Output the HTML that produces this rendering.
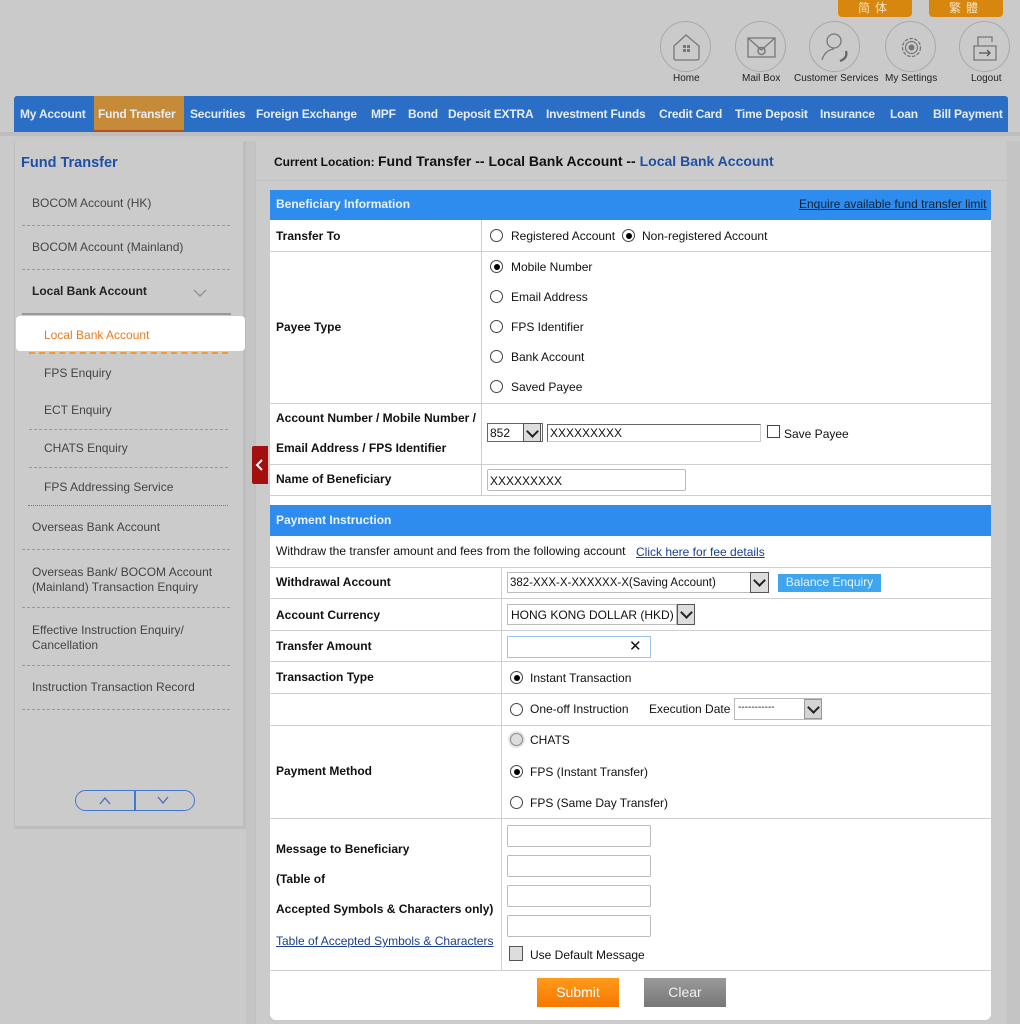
<!DOCTYPE html>
<html><head><meta charset="utf-8"><style>
*{margin:0;padding:0;box-sizing:border-box}
body{width:1020px;height:1024px;background:#cacaca;font-family:"Liberation Sans","Noto Sans CJK SC",sans-serif;position:relative;overflow:hidden;color:#111;font-size:12px}
.a{position:absolute;white-space:nowrap}
.t{position:absolute;white-space:nowrap;height:16px;line-height:16px}
.b{font-weight:bold}
.r{position:absolute;width:13px;height:13px;border:1px solid #444;border-radius:50%;background:#fff}
.r.on::after{content:"";position:absolute;left:2.5px;top:2.5px;width:6px;height:6px;border-radius:50%;background:#000}
.hl{position:absolute;left:270px;width:721px;height:1px;background:#cfcfcf}
.vl{position:absolute;width:1px;background:#cfcfcf}
.nav{position:absolute;top:96px;height:35px;line-height:36px;color:#e6ecf5;font-weight:bold;font-size:12px;letter-spacing:-0.2px;white-space:nowrap}
.sb{position:absolute;color:#444;font-size:12px;white-space:nowrap}
.dl{position:absolute;height:0;border-top:1px dashed #999}
.ic{position:absolute;top:21px;width:51px;height:51px;border:1px solid #a9a9a9;border-radius:50%}
.il{position:absolute;top:73px;font-size:10px;color:#222;white-space:nowrap}
.in{position:absolute;background:#fff;border:1px solid #bbb;height:20px}
.dd{position:absolute;width:18px;height:20px;border:1px solid #555;background:#ddd}
.dd::after{content:"";position:absolute;left:4px;top:3px;width:7px;height:7px;border-right:2px solid #222;border-bottom:2px solid #222;transform:rotate(45deg)}
</style></head><body>

<div class="a" style="left:838px;top:0;width:74px;height:17px;background:#d8870e;border-radius:0 0 4px 4px;color:#f6e2c0;text-align:center;line-height:16px;font-size:12px;letter-spacing:5px">简体</div>
<div class="a" style="left:929px;top:0;width:74px;height:17px;background:#d8870e;border-radius:0 0 4px 4px;color:#f6e2c0;text-align:center;line-height:16px;font-size:12px;letter-spacing:5px">繁體</div>

<div class="ic" style="left:660px"><svg width="51" height="51" viewBox="0 0 51 51"><path d="M13 24 L25 13 L38 24 V36 Q38 38 36 38 H15 Q13 38 13 36 Z" fill="none" stroke="#777" stroke-width="1.3"/><rect x="22" y="23" width="3" height="3" fill="#777"/><rect x="26" y="23" width="3" height="3" fill="#777"/><rect x="22" y="27" width="3" height="3" fill="#777"/><rect x="26" y="27" width="3" height="3" fill="#777"/></svg></div>
<div class="ic" style="left:735px"><svg width="51" height="51" viewBox="0 0 51 51"><rect x="12" y="16" width="27" height="19" fill="none" stroke="#777" stroke-width="1.3"/><path d="M12 16 L25.5 28 L39 16" fill="none" stroke="#777" stroke-width="1.3"/><circle cx="25.5" cy="29" r="3.5" fill="none" stroke="#777" stroke-width="1.5"/></svg></div>
<div class="ic" style="left:809px"><svg width="51" height="51" viewBox="0 0 51 51"><circle cx="24" cy="19" r="7" fill="none" stroke="#777" stroke-width="1.3"/><path d="M12 38 Q15 28 24 27" fill="none" stroke="#777" stroke-width="1.3"/><path d="M36 29 Q38 36 30 39" fill="none" stroke="#666" stroke-width="2.2"/></svg></div>
<div class="ic" style="left:885px"><svg width="51" height="51" viewBox="0 0 51 51"><circle cx="25.5" cy="25.5" r="9" fill="none" stroke="#777" stroke-width="1.3" stroke-dasharray="3.5 1.5"/><circle cx="25.5" cy="25.5" r="6" fill="none" stroke="#777" stroke-width="1.2"/><circle cx="25.5" cy="25.5" r="3" fill="#777"/></svg></div>
<div class="ic" style="left:959px"><svg width="51" height="51" viewBox="0 0 51 51"><path d="M14 24 V38 H36 V24 Z" fill="none" stroke="#777" stroke-width="1.3"/><path d="M18 24 V15 H32 V20" fill="none" stroke="#777" stroke-width="1.3"/><path d="M19 31 H30 M27 28 L30 31 L27 34" fill="none" stroke="#555" stroke-width="1.3"/></svg></div>
<div class="il" style="left:673px">Home</div>
<div class="il" style="left:742px">Mail Box</div>
<div class="il" style="left:794px">Customer Services</div>
<div class="il" style="left:885px">My Settings</div>
<div class="il" style="left:971px">Logout</div>

<div class="a" style="left:14px;top:96px;width:994px;height:36px;background:#2a6ec5;border-radius:3px 3px 0 0"></div>
<div class="a" style="left:94px;top:96px;width:90px;height:36px;background:#c58b38;border-bottom:2px solid #b3501c"></div>
<div class="a" style="left:0;top:132px;width:1020px;height:4px;background:#bdbdbd"></div>
<div class="nav" style="left:20px">My Account</div>
<div class="nav" style="left:98px">Fund Transfer</div>
<div class="nav" style="left:190px">Securities</div>
<div class="nav" style="left:256px">Foreign Exchange</div>
<div class="nav" style="left:371px">MPF</div>
<div class="nav" style="left:408px">Bond</div>
<div class="nav" style="left:448px">Deposit EXTRA</div>
<div class="nav" style="left:546px">Investment Funds</div>
<div class="nav" style="left:659px">Credit Card</div>
<div class="nav" style="left:735px">Time Deposit</div>
<div class="nav" style="left:820px">Insurance</div>
<div class="nav" style="left:890px">Loan</div>
<div class="nav" style="left:933px">Bill Payment</div>

<div class="a" style="left:14px;top:141px;width:232px;height:688px;background:#cbcbcb;border-right:3px solid #bdbdbd;border-bottom:3px solid #bdbdbd;border-left:1px solid #c0c0c0"></div>
<div class="a" style="left:246px;top:141px;width:9px;height:883px;background:#c4c4c4"></div>
<div class="sb b" style="left:21px;top:155px;font-size:14.5px;color:#1f4fa3">Fund Transfer</div>
<div class="sb" style="left:32px;top:196px">BOCOM Account (HK)</div>
<div class="dl" style="left:22px;top:225px;width:208px"></div>
<div class="sb" style="left:32px;top:240px">BOCOM Account (Mainland)</div>
<div class="dl" style="left:22px;top:269px;width:208px"></div>
<div class="sb b" style="left:32px;top:284px;color:#222">Local Bank Account</div>
<svg class="a" style="left:193px;top:289px" width="14" height="9"><path d="M1 1 L7 7 L13 1" fill="none" stroke="#888" stroke-width="1.2"/></svg>
<div class="a" style="left:22px;top:313px;width:209px;height:2px;background:#999"></div>
<div class="a" style="left:16px;top:316px;width:229px;height:35px;background:#fff;border-radius:4px"></div>
<div class="sb" style="left:44px;top:328px;color:#f07a1a">Local Bank Account</div>
<div class="dl" style="left:29px;top:352px;width:199px;border-top:2px dashed #f09a30"></div>
<div class="sb" style="left:44px;top:366px">FPS Enquiry</div>
<div class="sb" style="left:44px;top:403px">ECT Enquiry</div>
<div class="dl" style="left:29px;top:429px;width:199px"></div>
<div class="sb" style="left:44px;top:441px">CHATS Enquiry</div>
<div class="dl" style="left:29px;top:467px;width:199px"></div>
<div class="sb" style="left:44px;top:480px">FPS Addressing Service</div>
<div class="dl" style="left:28px;top:505px;width:200px;border-top:1px dotted #777"></div>
<div class="sb" style="left:32px;top:520px">Overseas Bank Account</div>
<div class="dl" style="left:22px;top:549px;width:208px"></div>
<div class="sb" style="left:32px;top:565px;line-height:15px">Overseas Bank/ BOCOM Account<br>(Mainland) Transaction Enquiry</div>
<div class="dl" style="left:22px;top:607px;width:208px"></div>
<div class="sb" style="left:32px;top:623px;line-height:15px">Effective Instruction Enquiry/<br>Cancellation</div>
<div class="dl" style="left:22px;top:665px;width:208px"></div>
<div class="sb" style="left:32px;top:680px">Instruction Transaction Record</div>
<div class="dl" style="left:22px;top:709px;width:208px"></div>
<div class="a" style="left:75px;top:790px;width:120px;height:21px;border:1.5px solid #3f7ad0;border-radius:11px"></div>
<div class="a" style="left:134px;top:790px;width:1.5px;height:21px;background:#3f7ad0"></div>
<svg class="a" style="left:99px;top:796px" width="12" height="9"><path d="M1 8 L6 2 L11 8" fill="none" stroke="#3f6fc0" stroke-width="1.3"/></svg>
<svg class="a" style="left:157px;top:796px" width="12" height="9"><path d="M1 1 L6 7 L11 1" fill="none" stroke="#3f6fc0" stroke-width="1.3"/></svg>

<div class="a" style="left:255px;top:141px;width:752px;height:883px;background:#cbcbcb;border-left:1px solid #c0c0c0"></div>
<div class="a" style="left:255px;top:180px;width:752px;height:1px;background:#c0c0c0"></div>
<div class="a" style="left:1007px;top:141px;width:13px;height:883px;background:#c4c4c4"></div>
<div class="t b" style="left:274px;top:153px;font-size:12px">Current Location: <span style="font-size:14px">Fund Transfer -- Local Bank Account -- </span><span style="font-size:14px;color:#1f4fa3">Local Bank Account</span></div>

<div class="a" style="left:252px;top:446px;width:16px;height:38px;background:#a40f10;border-radius:2px 0 0 2px"></div>
<svg class="a" style="left:255px;top:459px" width="10" height="12"><path d="M7 1 L2 6 L7 11" fill="none" stroke="#fff" stroke-width="2"/></svg>

<div class="a" style="left:270px;top:190px;width:721px;height:830px;background:#fff;border-radius:0 0 6px 6px"></div>
<div class="a" style="left:270px;top:190px;width:721px;height:30px;background:#2e8cef"></div>
<div class="t b" style="left:276px;top:196px;color:#eaf2fc">Beneficiary Information</div>
<div class="t" style="left:799px;top:196px;color:#123;text-decoration:underline">Enquire available fund transfer limit</div>

<div class="hl" style="top:251px"></div>
<div class="hl" style="top:403px"></div>
<div class="hl" style="top:464px"></div>
<div class="hl" style="top:495px"></div>
<div class="vl" style="left:481px;top:220px;height:275px"></div>
<div class="t b" style="left:276px;top:228px">Transfer To</div>
<div class="r" style="left:490px;top:229px"></div><div class="t" style="left:511px;top:228px">Registered Account</div>
<div class="r on" style="left:622px;top:229px"></div><div class="t" style="left:642px;top:228px">Non-registered Account</div>
<div class="t b" style="left:276px;top:319px">Payee Type</div>
<div class="r on" style="left:490px;top:260px"></div><div class="t" style="left:511px;top:259px">Mobile Number</div>
<div class="r" style="left:490px;top:290px"></div><div class="t" style="left:511px;top:289px">Email Address</div>
<div class="r" style="left:490px;top:320px"></div><div class="t" style="left:511px;top:319px">FPS Identifier</div>
<div class="r" style="left:490px;top:350px"></div><div class="t" style="left:511px;top:349px">Bank Account</div>
<div class="r" style="left:490px;top:380px"></div><div class="t" style="left:511px;top:379px">Saved Payee</div>
<div class="t b" style="left:276px;top:410px">Account Number / Mobile Number /</div>
<div class="t b" style="left:276px;top:440px">Email Address / FPS Identifier</div>
<div class="in" style="left:487px;top:423px;width:56px;height:19px;border-color:#666"></div>
<div class="t" style="left:490px;top:425px">852</div>
<div class="dd" style="left:523px;top:423px;height:19px"></div>
<div class="in" style="left:547px;top:424px;width:214px;height:18px;border-color:#666 #ccc #ccc #666"></div>
<div class="t" style="left:550px;top:425px">XXXXXXXXX</div>
<div class="a" style="left:767px;top:425px;width:13px;height:13px;border:1px solid #444"></div>
<div class="t" style="left:784px;top:426px">Save Payee</div>
<div class="t b" style="left:276px;top:471px">Name of Beneficiary</div>
<div class="in" style="left:487px;top:469px;width:199px;height:22px;border-radius:2px"></div>
<div class="t" style="left:490px;top:473px">XXXXXXXXX</div>

<div class="a" style="left:270px;top:505px;width:721px;height:31px;background:#2e8cef"></div>
<div class="t b" style="left:276px;top:512px;color:#eaf2fc">Payment Instruction</div>
<div class="t" style="left:276px;top:543px">Withdraw the transfer amount and fees from the following account</div>
<div class="t" style="left:636px;top:544px;color:#1a3f8f;text-decoration:underline">Click here for fee details</div>

<div class="hl" style="top:567px"></div>
<div class="hl" style="top:598px"></div>
<div class="hl" style="top:630px"></div>
<div class="hl" style="top:661px"></div>
<div class="hl" style="top:693px"></div>
<div class="hl" style="top:725px"></div>
<div class="hl" style="top:818px"></div>
<div class="hl" style="top:970px"></div>
<div class="vl" style="left:501px;top:567px;height:403px"></div>

<div class="t b" style="left:276px;top:574px">Withdrawal Account</div>
<div class="in" style="left:507px;top:572px;width:244px;height:21px"></div>
<div class="t" style="left:510px;top:575px;font-size:11.5px">382-XXX-X-XXXXXX-X(Saving Account)</div>
<div class="dd" style="left:750px;top:572px;height:21px;width:19px"></div>
<div class="a" style="left:778px;top:574px;width:103px;height:18px;background:#3fa6ee;color:#e6f2fc;text-align:center;line-height:16px">Balance Enquiry</div>

<div class="t b" style="left:276px;top:607px">Account Currency</div>
<div class="in" style="left:507px;top:604px;width:170px;height:21px"></div>
<div class="t" style="left:511px;top:607px">HONG KONG DOLLAR (HKD)</div>
<div class="dd" style="left:677px;top:604px;height:21px"></div>

<div class="t b" style="left:276px;top:638px">Transfer Amount</div>
<div class="in" style="left:507px;top:636px;width:144px;height:22px;border-color:#9cc4ea"></div>
<div class="t" style="left:629px;top:639px;font-size:15px">✕</div>

<div class="t b" style="left:276px;top:669px">Transaction Type</div>
<div class="r on" style="left:510px;top:671px"></div><div class="t" style="left:530px;top:670px">Instant Transaction</div>
<div class="r" style="left:510px;top:703px"></div><div class="t" style="left:530px;top:701px">One-off Instruction</div>
<div class="t" style="left:649px;top:701px">Execution Date</div>
<div class="in" style="left:734px;top:698px;width:88px;height:22px"></div>
<div class="t" style="left:738px;top:700px;font-size:10px">-----------</div>
<div class="dd" style="left:804px;top:699px;height:20px;border-color:#999;background:#d4d4d4"></div>

<div class="t b" style="left:276px;top:763px">Payment Method</div>
<div class="r" style="left:510px;top:733px;border-color:#888;background:#ddd;box-shadow:0 0 0 2px #e4e4e4"></div><div class="t" style="left:530px;top:732px">CHATS</div>
<div class="r on" style="left:510px;top:765px"></div><div class="t" style="left:530px;top:764px">FPS (Instant Transfer)</div>
<div class="r" style="left:510px;top:796px"></div><div class="t" style="left:530px;top:795px">FPS (Same Day Transfer)</div>

<div class="t b" style="left:276px;top:841px">Message to Beneficiary</div>
<div class="t b" style="left:276px;top:871px">(Table of</div>
<div class="t b" style="left:276px;top:901px">Accepted Symbols &amp; Characters only)</div>
<div class="t" style="left:276px;top:933px;color:#1a3f8f;text-decoration:underline">Table of Accepted Symbols &amp; Characters</div>
<div class="in" style="left:507px;top:825px;width:144px;height:22px;border-radius:2px"></div>
<div class="in" style="left:507px;top:855px;width:144px;height:22px;border-radius:2px"></div>
<div class="in" style="left:507px;top:885px;width:144px;height:22px;border-radius:2px"></div>
<div class="in" style="left:507px;top:915px;width:144px;height:22px;border-radius:2px"></div>
<div class="a" style="left:509px;top:946px;width:14px;height:15px;border:1px solid #555;background:#ddd"></div>
<div class="t" style="left:530px;top:947px">Use Default Message</div>

<div class="a" style="left:537px;top:978px;width:82px;height:29px;background:linear-gradient(#ff9a1a,#f57800);color:#fff;text-align:center;line-height:29px;font-size:14px">Submit</div>
<div class="a" style="left:644px;top:978px;width:82px;height:29px;background:linear-gradient(#9a9a9a,#777);color:#f0f0f0;text-align:center;line-height:29px;font-size:14px">Clear</div>
</body></html>
